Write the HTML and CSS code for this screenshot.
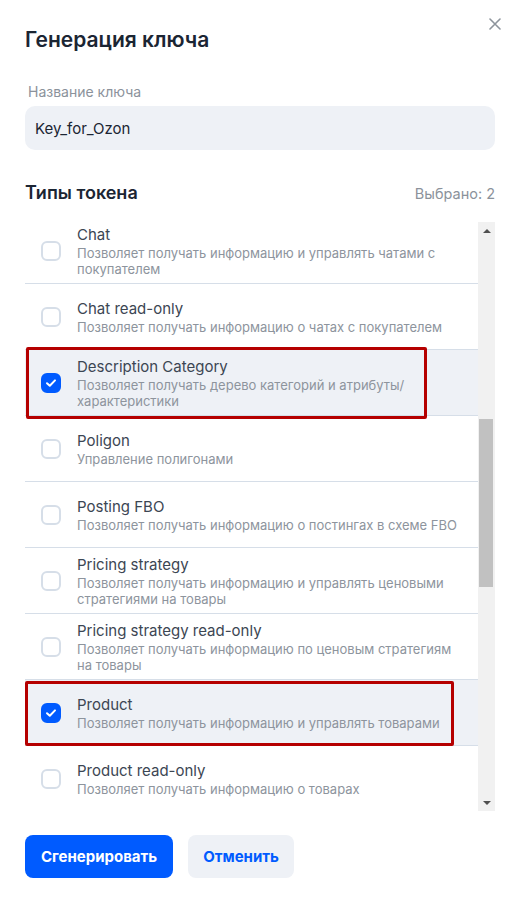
FILE: index.html
```html
<!DOCTYPE html>
<html lang="ru">
<head>
<meta charset="utf-8">
<title>Генерация ключа</title>
<link rel="stylesheet" href="styles.css">
</head>
<body>
<div class="modal">
  <button class="close" aria-label="Закрыть">
    <svg width="12" height="12" viewBox="0 0 12 12"><path d="M1 1L11 11M11 1L1 11" stroke="#8d949c" stroke-width="1.6" stroke-linecap="round"/></svg>
  </button>
  <h1 class="title">Генерация ключа</h1>
  <label class="field-label">Название ключа</label>
  <div class="input">Key_for_Ozon</div>
  <div class="section-head">
    <h2 class="section-title">Типы токена</h2>
    <span class="counter">Выбрано: 2</span>
  </div>
  <div class="list-wrap">
    <div class="list">
      <div class="list-inner">
        <div class="row">
          <span class="cb"></span>
          <div class="txt"><div class="name">Chat</div><div class="desc">Позволяет получать информацию и управлять чатами с покупателем</div></div>
        </div>
        <div class="row">
          <span class="cb"></span>
          <div class="txt"><div class="name">Chat read-only</div><div class="desc">Позволяет получать информацию о чатах с покупателем</div></div>
        </div>
        <div class="row selected">
          <span class="cb checked"><svg width="12" height="10" viewBox="0 0 12 10"><path d="M2 5.2L4.8 7.8L10 2.4" fill="none" stroke="#fff" stroke-width="2" stroke-linecap="round" stroke-linejoin="round"/></svg></span>
          <div class="txt"><div class="name">Description Category</div><div class="desc">Позволяет получать дерево категорий и атрибуты/ характеристики</div></div>
          <span class="mark mark-desc"></span>
        </div>
        <div class="row">
          <span class="cb"></span>
          <div class="txt"><div class="name">Poligon</div><div class="desc">Управление полигонами</div></div>
        </div>
        <div class="row">
          <span class="cb"></span>
          <div class="txt"><div class="name">Posting FBO</div><div class="desc">Позволяет получать информацию о постингах в схеме FBO</div></div>
        </div>
        <div class="row">
          <span class="cb"></span>
          <div class="txt"><div class="name">Pricing strategy</div><div class="desc">Позволяет получать информацию и управлять ценовыми стратегиями на товары</div></div>
        </div>
        <div class="row">
          <span class="cb"></span>
          <div class="txt"><div class="name">Pricing strategy read-only</div><div class="desc">Позволяет получать информацию по ценовым стратегиям на товары</div></div>
        </div>
        <div class="row selected">
          <span class="cb checked"><svg width="12" height="10" viewBox="0 0 12 10"><path d="M2 5.2L4.8 7.8L10 2.4" fill="none" stroke="#fff" stroke-width="2" stroke-linecap="round" stroke-linejoin="round"/></svg></span>
          <div class="txt"><div class="name">Product</div><div class="desc">Позволяет получать информацию и управлять товарами</div></div>
          <span class="mark mark-prod"></span>
        </div>
        <div class="row">
          <span class="cb"></span>
          <div class="txt"><div class="name">Product read-only</div><div class="desc">Позволяет получать информацию о товарах</div></div>
        </div>
        <div class="row">
          <span class="cb"></span>
          <div class="txt"><div class="name">Report</div><div class="desc">Позволяет получать отчёты</div></div>
        </div>
      </div>
    </div>
    <div class="scrollbar">
      <div class="sb-btn"><span class="tri-up"></span></div>
      <div class="sb-track"><div class="sb-thumb"></div></div>
      <div class="sb-btn"><span class="tri-down"></span></div>
    </div>
  </div>
  <div class="actions">
    <div class="btn btn-primary"><span class="btn-label">Сгенерировать</span></div>
    <div class="btn btn-secondary"><span class="btn-label">Отменить</span></div>
  </div>
</div>
</body>
</html>
```

FILE: styles.css
```css
* { box-sizing: border-box; }
html, body { margin: 0; padding: 0; background: #fff; }
body {
  font-family: Inter, "Noto Sans", "Liberation Sans", sans-serif;
  color: #1b2533;
  width: 521px;
  height: 902px;
  overflow: hidden;
}
.modal {
  position: relative;
  padding: 26px 26px 0 25px;
  display: flex;
  flex-direction: column;
}
.close {
  position: absolute;
  top: 18px;
  left: 489px;
  width: 12px;
  height: 12px;
  padding: 0;
  border: 0;
  background: none;
  display: flex;
}
.title {
  margin: 0;
  font-size: 21px;
  line-height: 28px;
  font-weight: 600;
  color: #1b2533;
}
.field-label {
  margin-top: 28px;
  font-size: 14px;
  line-height: 20px;
  color: #8b929b;
  padding-left: 3px;
}
.input {
  margin-top: 4px;
  height: 44px;
  border-radius: 10px;
  background: #eef1f6;
  padding: 0 10px;
  display: flex;
  align-items: center;
  font-size: 15px;
  color: #1b2533;
}
.section-head {
  margin-top: 31px;
  display: flex;
  justify-content: space-between;
  align-items: center;
  height: 24px;
}
.section-title {
  margin: 0;
  font-size: 18px;
  line-height: 24px;
  font-weight: 600;
  color: #1b2533;
}
.counter {
  font-size: 14.5px;
  color: #8b929b;
}
.list-wrap {
  margin-top: 17px;
  height: 589px;
  display: flex;
}
.list {
  flex: 1;
  overflow: hidden;
  position: relative;
}
.list-inner {
  margin-top: -4px;
}
.row {
  position: relative;
  display: flex;
  align-items: center;
  min-height: 66px;
  padding: 7px 16px 6px 16px;
  border-bottom: 1px solid #d6dee8;
}
.row.selected { background: #eef1f6; }
.cb {
  flex: none;
  width: 20px;
  height: 20px;
  border: 2px solid #d6dee8;
  border-radius: 6px;
  margin-right: 16px;
  display: flex;
  align-items: center;
  justify-content: center;
  background: #fff;
}
.cb.checked {
  background: #005bff;
  border-color: #005bff;
}
.txt { flex: 1; min-width: 0; }
.name {
  font-size: 15px;
  line-height: 20px;
  color: #3c4653;
}
.desc {
  font-size: 13px;
  line-height: 16px;
  color: #8d949d;
}
.mark {
  position: absolute;
  border: 3px solid #b50000;
  border-radius: 2px;
  pointer-events: none;
}
.mark-desc { top: -3px; left: 1px; width: 401px; height: 72px; }
.mark-prod { top: 1px; left: 0; width: 429px; height: 65px; }
.scrollbar {
  flex: none;
  width: 17px;
  background: #f1f1f1;
  display: flex;
  flex-direction: column;
}
.sb-btn {
  height: 17px;
  display: flex;
  align-items: center;
  justify-content: center;
}
.tri-up, .tri-down {
  width: 0; height: 0;
  border-left: 4px solid transparent;
  border-right: 4px solid transparent;
}
.tri-up { border-bottom: 4px solid #505050; }
.tri-down { border-top: 4px solid #505050; }
.sb-track { flex: 1; }
.sb-thumb {
  margin: 180px 2px 0 1px;
  height: 168px;
  background: #c1c1c1;
}
.actions {
  margin-top: 24px;
  display: flex;
  gap: 15px;
}
.btn {
  height: 43px;
  border-radius: 8px;
  font-size: 15px;
  line-height: 20px;
  font-weight: 700;
  white-space: nowrap;
  display: flex;
  align-items: center;
  justify-content: center;
}
.btn-primary { background: #005bff; color: #fff; padding: 0 16px; }
.btn-secondary { background: #eef1f6; color: #005bff; padding: 0 15px; }
```
